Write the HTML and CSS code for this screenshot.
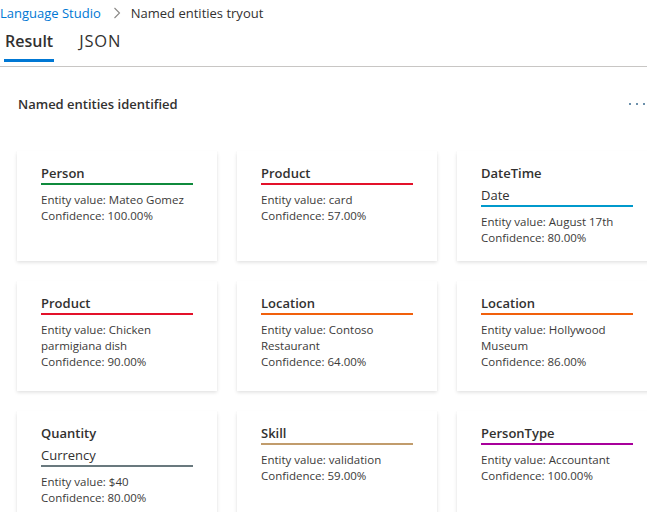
FILE: index.html
```html
<!DOCTYPE html>
<html>
<head>
<meta charset="utf-8">
<link rel="stylesheet" href="styles.css">
</head>
<body>
<div class="page">
  <nav class="crumbs">
    <a class="crumb-link">Language Studio</a>
    <svg class="chev" width="8" height="12" viewBox="0 0 8 12"><path d="M1.5 1 L6.5 6 L1.5 11" fill="none" stroke="#8a8886" stroke-width="1.1"/></svg>
    <span class="crumb-current">Named entities tryout</span>
  </nav>
  <div class="tabs">
    <div class="tab active">Result</div>
    <div class="tab tab-plain">JSON</div>
  </div>
  <div class="section-head">
    <h2 class="section-title">Named entities identified</h2>
    <div class="more"><span></span><span></span><span></span></div>
  </div>
  <div class="grid">
    <div class="card">
      <div class="cat c-person"><div class="cat-name">Person</div></div>
      <div class="info">Entity value: Mateo Gomez<br>Confidence: 100.00%</div>
    </div>
    <div class="card">
      <div class="cat c-product"><div class="cat-name">Product</div></div>
      <div class="info">Entity value: card<br>Confidence: 57.00%</div>
    </div>
    <div class="card">
      <div class="cat c-datetime"><div class="cat-name">DateTime</div><div class="sub-name">Date</div></div>
      <div class="info">Entity value: August 17th<br>Confidence: 80.00%</div>
    </div>
    <div class="card">
      <div class="cat c-product"><div class="cat-name">Product</div></div>
      <div class="info">Entity value: Chicken parmigiana dish<br>Confidence: 90.00%</div>
    </div>
    <div class="card">
      <div class="cat c-location"><div class="cat-name">Location</div></div>
      <div class="info">Entity value: Contoso Restaurant<br>Confidence: 64.00%</div>
    </div>
    <div class="card">
      <div class="cat c-location"><div class="cat-name">Location</div></div>
      <div class="info">Entity value: Hollywood Museum<br>Confidence: 86.00%</div>
    </div>
    <div class="card">
      <div class="cat c-quantity"><div class="cat-name">Quantity</div><div class="sub-name">Currency</div></div>
      <div class="info">Entity value: $40<br>Confidence: 80.00%</div>
    </div>
    <div class="card">
      <div class="cat c-skill"><div class="cat-name">Skill</div></div>
      <div class="info">Entity value: validation<br>Confidence: 59.00%</div>
    </div>
    <div class="card">
      <div class="cat c-persontype"><div class="cat-name">PersonType</div></div>
      <div class="info">Entity value: Accountant<br>Confidence: 100.00%</div>
    </div>
  </div>
</div>
</body>
</html>
```
FILE: styles.css
```css
html, body {
  margin: 0;
  padding: 0;
  background: #fff;
  overflow: hidden;
}
body {
  font-family: "Open Sans", "Noto Sans", sans-serif;
  color: #323130;
  width: 647px;
  height: 512px;
}
.page {
  width: 647px;
  height: 512px;
  overflow: hidden;
}
.crumbs {
  display: flex;
  align-items: center;
  height: 26px;
  font-size: 13px;
}
.crumb-link {
  color: #0078d4;
}
.chev {
  margin: 0 10px 0 12px;
}
.crumb-current {
  color: #323130;
}
.tabs {
  display: flex;
  gap: 24px;
  padding-left: 4px;
  border-bottom: 1px solid #c8c6c4;
  width: 643px;
  height: 40px;
}
.tab {
  font-size: 16px;
  line-height: 30px;
  color: #323130;
  box-sizing: border-box;
  height: 36px;
  padding: 0 1px;
}
.tab.active {
  font-weight: 600;
  border-bottom: 3px solid #0078d4;
}
.tab-plain {
  font-size: 16.5px;
  letter-spacing: 0.8px;
}
.section-head {
  display: flex;
  align-items: center;
  justify-content: space-between;
  width: 647px;
  box-sizing: border-box;
  padding: 0 2px 0 18px;
  height: 38px;
  margin-top: 18px;
  margin-bottom: 28px;
}
.section-title {
  margin: 0;
  font-size: 13px;
  font-weight: 600;
  color: #323130;
}
.more {
  display: flex;
  gap: 5px;
  margin-top: 0;
}
.more span {
  width: 2px;
  height: 2px;
  background: #3b6b8f;
  border-radius: 1px;
}
.grid {
  display: grid;
  grid-template-columns: repeat(3, 200px);
  grid-auto-rows: 110px;
  gap: 20px;
  padding-left: 17px;
}
.card {
  background: #fff;
  box-shadow: 0 1.6px 3.6px rgba(0,0,0,0.13), 0 0.3px 0.9px rgba(0,0,0,0.11);
  padding: 13px 24px 0 24px;
  box-sizing: border-box;
}
.cat {
  border-bottom: 2px solid;
  padding-bottom: 1px;
  margin-bottom: 7px;
}
.cat-name {
  font-size: 13px;
  font-weight: 600;
  line-height: 18px;
}
.sub-name {
  font-size: 13px;
  line-height: 18px;
  margin-top: 4px;
}
.info {
  font-size: 11.5px;
  line-height: 16px;
  color: #3b3a39;
}
.c-person { border-color: #0f8a3c; }
.c-product { border-color: #e3112a; }
.c-datetime { border-color: #0099cc; }
.c-location { border-color: #f1600c; }
.c-quantity { border-color: #69797e; }
.c-skill { border-color: #c19c6c; }
.c-persontype { border-color: #a8009b; }
```
